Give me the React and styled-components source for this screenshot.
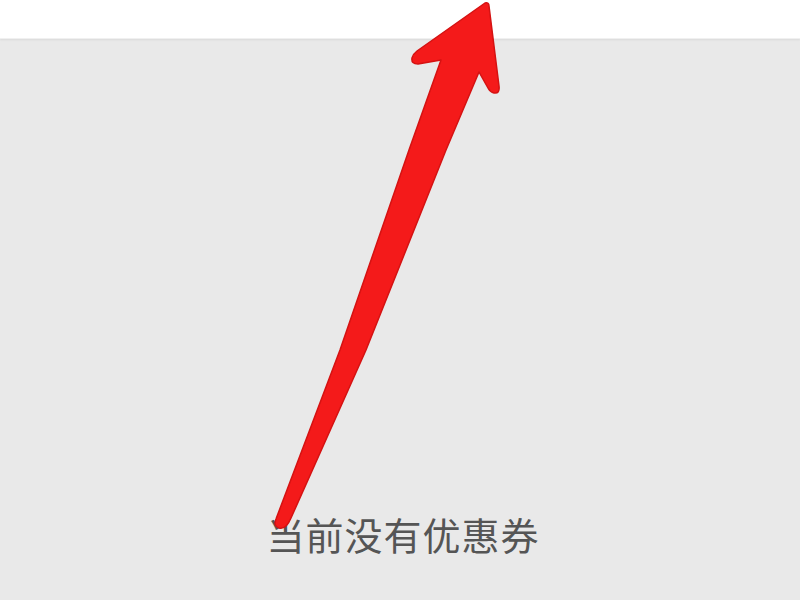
import React from "react";
import styled, { createGlobalStyle } from "styled-components";

const Global = createGlobalStyle`
  html, body { margin: 0; padding: 0; }
  body { background: #e9e9e9; font-family: "Noto Sans CJK SC", "Noto Sans", sans-serif; }
`;

const Page = styled.div`
  position: relative;
  width: 800px;
  height: 600px;
  display: flex;
  flex-direction: column;
  background: #e9e9e9;
  overflow: hidden;
`;

const Header = styled.header`
  height: 38px;
  flex: none;
  background: #ffffff;
  box-shadow: 0 1px 2px rgba(0, 0, 0, 0.07);
  border-bottom: 1px solid #f0f0f0;
`;

const Content = styled.main`
  flex: 1;
  display: flex;
  flex-direction: column;
  align-items: center;
  justify-content: flex-end;
  padding-bottom: 43px;
`;

const Empty = styled.p`
  margin: 0;
  font-size: 38px;
  line-height: 46px;
  color: #555555;
  letter-spacing: 1px;
  padding-left: 6px;
`;

const Arrow = styled.svg`
  position: absolute;
  left: 0;
  top: 0;
  width: 800px;
  height: 600px;
  pointer-events: none;
`;

export default function App() {
  return (
    <>
      <Global />
      <Page>
        <Header />
        <Content>
          <Empty>当前没有优惠券</Empty>
        </Content>
        <Arrow viewBox="0 0 800 600">
          <path
            d="M485 3 Q489 2 489 6 L499 86 Q500 94 494 93 Q490 92 488 88 L479 72 L446 150 L366 350 L291 518 Q286 530 279 528 Q273 526 276 519 L340 350 L409 150 L441 60 L418 64 Q411 64 412 58 Q413 54 417 51 Z"
            fill="#f41a1a"
            stroke="#d51212"
            strokeWidth="1.5"
            strokeLinejoin="round"
          />
        </Arrow>
      </Page>
    </>
  );
}
